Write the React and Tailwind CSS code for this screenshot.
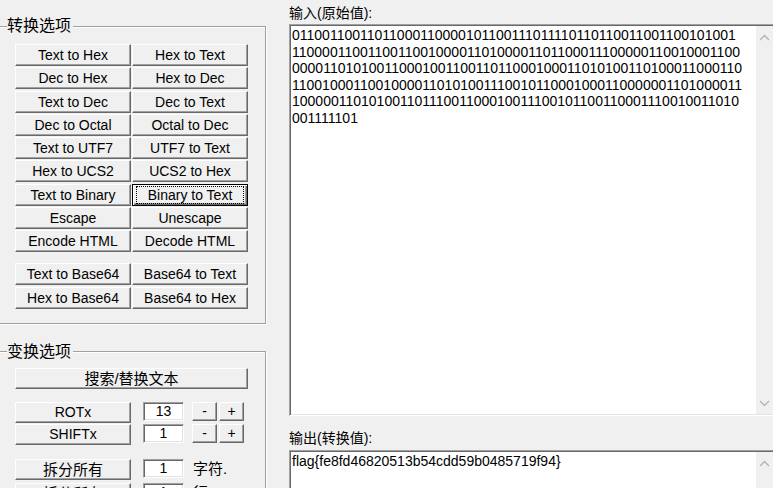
import React from 'react'

const FLAG = 'flag{fe8fd46820513b54cdd59b0485719f94}'

// binary form of the flag, wrapped at 59 digits like the edit box does
const bits = Array.from(FLAG, (c) => c.charCodeAt(0).toString(2).padStart(8, '0')).join('')
const binaryLines = bits.match(/.{1,59}/g)

const convertRows = [
  ['Text to Hex', 'Hex to Text'],
  ['Dec to Hex', 'Hex to Dec'],
  ['Text to Dec', 'Dec to Text'],
  ['Dec to Octal', 'Octal to Dec'],
  ['Text to UTF7', 'UTF7 to Text'],
  ['Hex to UCS2', 'UCS2 to Hex'],
  ['Text to Binary', 'Binary to Text'],
  ['Escape', 'Unescape'],
  ['Encode HTML', 'Decode HTML'],
]

const base64Rows = [
  ['Text to Base64', 'Base64 to Text'],
  ['Hex to Base64', 'Base64 to Hex'],
]

const raised =
  'bg-[#f0f0f0] border border-t-white border-l-white border-r-[#696969] border-b-[#696969] shadow-[inset_-1px_-1px_0_#a0a0a0]'

const sunken =
  'bg-white border border-t-[#a0a0a0] border-l-[#a0a0a0] border-r-white border-b-white shadow-[inset_1px_1px_0_#696969,inset_-1px_-1px_0_#e3e3e3]'

const Btn = ({ children, className = '' }) => (
  <button className={`${raised} flex items-center justify-center text-[14px] leading-none text-black ${className}`}>
    {children}
  </button>
)

// the default button: black frame and dotted focus rectangle
const FocusBtn = ({ children }) => (
  <button className="h-[22px] w-[116px] bg-[#f0f0f0] border border-black shadow-[inset_1px_1px_0_white,inset_-1px_-1px_0_#696969,inset_-2px_-2px_0_#a0a0a0] flex items-center justify-center text-[14px] leading-none text-black">
    <span className="border border-dotted border-black px-[3px] py-[1px] w-[108px] text-center">{children}</span>
  </button>
)

const Field = ({ value, className = '' }) => (
  <input
    readOnly
    value={value}
    className={`${sunken} block h-[19px] w-[41px] p-0 text-center text-[14px] leading-none text-black outline-none ${className}`}
  />
)

const Chevron = ({ down }) => (
  <svg width="11" height="7" viewBox="0 0 11 7">
    <polyline
      points={down ? '1,1 5.5,5.5 10,1' : '1,6 5.5,1.5 10,6'}
      fill="none"
      stroke="#b4b4b4"
      strokeWidth="1.4"
    />
  </svg>
)

const ScrollBar = ({ showDown = true }) => (
  <div className="w-[17px] shrink-0 bg-[#f0f0f0] flex flex-col justify-between">
    <div className="h-[22px] flex items-center justify-center">
      <Chevron />
    </div>
    {showDown && (
      <div className="h-[22px] flex items-center justify-center">
        <Chevron down />
      </div>
    )}
  </div>
)

const Legend = ({ children }) => (
  <legend className="ml-[7px] pl-0 pr-[2px] text-[16px] leading-[16px] bg-[#f0f0f0] text-black">{children}</legend>
)

export default function App() {
  return (
    <div className="w-[773px] h-[488px] overflow-hidden bg-[#f0f0f0] flex font-['Liberation_Sans','Noto_Sans_CJK_SC',sans-serif] text-black select-none">
      {/* left: option groups */}
      <div className="w-[289px] shrink-0 pt-[18px]">
        <fieldset className="w-[266px] p-0 m-0 border border-l-0 border-[#a0a0a0] shadow-[1px_1px_0_white,inset_0_1px_0_white]">
          <Legend>转换选项</Legend>
          <div className="pl-[15px] pt-[10px] pb-[14px]">
            <div className="grid grid-cols-[116px_116px] gap-x-[1px] gap-y-[1.3px]">
              {convertRows.map(([a, b]) => (
                <React.Fragment key={a}>
                  <Btn className="h-[22px]">{a}</Btn>
                  {b === 'Binary to Text' ? <FocusBtn>{b}</FocusBtn> : <Btn className="h-[22px]">{b}</Btn>}
                </React.Fragment>
              ))}
            </div>
            <div className="mt-[11px] grid grid-cols-[116px_116px] gap-x-[1px] gap-y-[1.3px]">
              {base64Rows.map(([a, b]) => (
                <React.Fragment key={a}>
                  <Btn className="h-[22px]">{a}</Btn>
                  <Btn className="h-[22px]">{b}</Btn>
                </React.Fragment>
              ))}
            </div>
          </div>
        </fieldset>

        <fieldset className="mt-[20px] w-[266px] p-0 m-0 border border-l-0 border-[#a0a0a0] shadow-[1px_1px_0_white,inset_0_1px_0_white]">
          <Legend>变换选项</Legend>
          <div className="pl-[15px] pt-[8px] pb-[10px]">
            <Btn className="h-[21px] w-[233px] text-[15px]">搜索/替换文本</Btn>

            <div className="mt-[13px] flex flex-col gap-[1px]">
              {[
                ['ROTx', '13'],
                ['SHIFTx', '1'],
              ].map(([label, val]) => (
                <div key={label} className="flex items-start">
                  <Btn className="h-[21px] w-[116px]">{label}</Btn>
                  <Field value={val} className="ml-[12px]" />
                  <Btn className="ml-[8px] h-[19px] w-[25px]">-</Btn>
                  <Btn className="ml-[2px] h-[19px] w-[25px]">+</Btn>
                </div>
              ))}
            </div>

            <div className="mt-[14px] flex flex-col gap-[3px]">
              {['字符.', '行.'].map((unit) => (
                <div key={unit} className="flex items-start">
                  <Btn className="h-[21px] w-[116px] text-[15px]">拆分所有</Btn>
                  <Field value="1" className="ml-[12px]" />
                  <span className="ml-[9px] text-[15px] leading-[19px]">{unit}</span>
                </div>
              ))}
            </div>
          </div>
        </fieldset>
      </div>

      {/* right: input and output */}
      <div className="w-[486px] shrink-0 pt-[4px]">
        <div className="h-[18px] mb-[2px] text-[14px] leading-[18px]">输入(原始值):</div>
        <div className={`${sunken} h-[392px] flex p-[1px]`}>
          <div className="flex-1 pl-[1px] pt-[1px] text-[14px] leading-[16.6px] text-black">
            {binaryLines.map((line, i) => (
              <div key={i}>{line}</div>
            ))}
          </div>
          <ScrollBar />
        </div>

        <div className="mt-[13px] h-[18px] mb-[3px] text-[14px] leading-[18px]">输出(转换值):</div>
        <div className={`${sunken} h-[60px] flex p-[1px]`}>
          <div className="flex-1 pl-[1px] pt-[1px] text-[14px] leading-[16.6px] text-black">{FLAG}</div>
          <ScrollBar showDown={false} />
        </div>
      </div>
    </div>
  )
}
